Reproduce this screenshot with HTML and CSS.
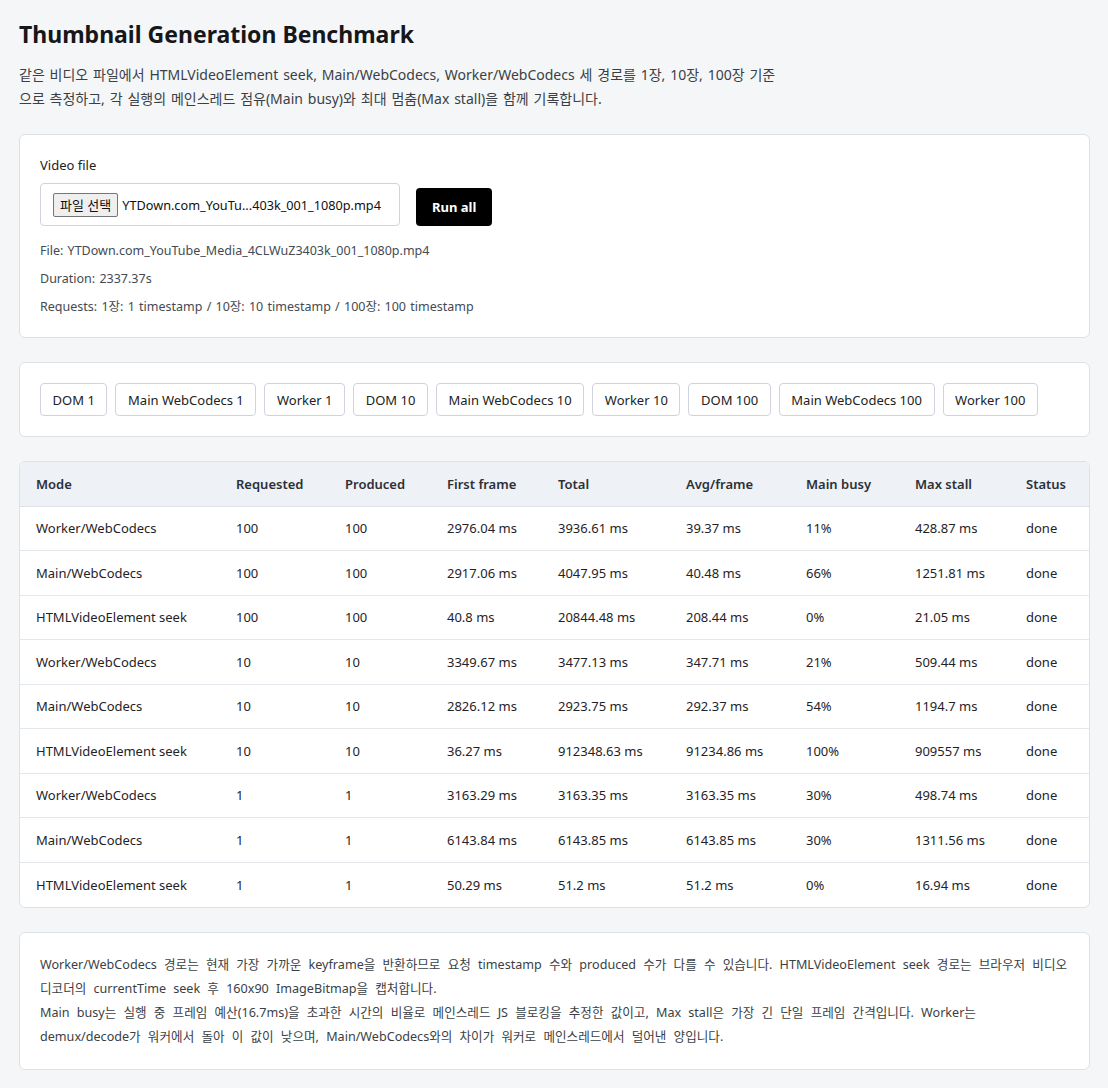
FILE: index.html
```html
<!DOCTYPE html>
<html lang="ko">
<head>
<meta charset="utf-8">
<title>Thumbnail Generation Benchmark</title>
<link rel="stylesheet" href="styles.css">
</head>
<body>
<main class="page">
  <h1 class="title">Thumbnail Generation Benchmark</h1>
  <p class="lead">같은 비디오 파일에서 HTMLVideoElement seek, Main/WebCodecs, Worker/WebCodecs 세 경로를 1장, 10장, 100장 기준으로 측정하고, 각 실행의 메인스레드 점유(Main busy)와 최대 멈춤(Max stall)을 함께 기록합니다.</p>

  <section class="card">
    <div class="field-label">Video file</div>
    <div class="file-row">
      <div class="file-input">
        <span class="file-btn">파일 선택</span>
        <span class="file-name">YTDown.com_YouTu...403k_001_1080p.mp4</span>
      </div>
      <button class="run-btn">Run all</button>
    </div>
    <p class="meta first">File: YTDown.com_YouTube_Media_4CLWuZ3403k_001_1080p.mp4</p>
    <p class="meta">Duration: 2337.37s</p>
    <p class="meta">Requests: 1장: 1 timestamp / 10장: 10 timestamp / 100장: 100 timestamp</p>
  </section>

  <section class="card buttons">
    <button class="mode-btn">DOM 1</button>
    <button class="mode-btn">Main WebCodecs 1</button>
    <button class="mode-btn">Worker 1</button>
    <button class="mode-btn">DOM 10</button>
    <button class="mode-btn">Main WebCodecs 10</button>
    <button class="mode-btn">Worker 10</button>
    <button class="mode-btn">DOM 100</button>
    <button class="mode-btn">Main WebCodecs 100</button>
    <button class="mode-btn">Worker 100</button>
  </section>

  <section class="card table-card">
    <table class="results">
      <colgroup>
        <col class="c-mode"><col class="c-req"><col class="c-prod"><col class="c-first"><col class="c-total"><col class="c-avg"><col class="c-busy"><col class="c-stall"><col class="c-status">
      </colgroup>
      <thead>
        <tr><th>Mode</th><th>Requested</th><th>Produced</th><th>First frame</th><th>Total</th><th>Avg/frame</th><th>Main busy</th><th>Max stall</th><th>Status</th></tr>
      </thead>
      <tbody>
        <tr><td>Worker/WebCodecs</td><td>100</td><td>100</td><td>2976.04 ms</td><td>3936.61 ms</td><td>39.37 ms</td><td>11%</td><td>428.87 ms</td><td>done</td></tr>
        <tr><td>Main/WebCodecs</td><td>100</td><td>100</td><td>2917.06 ms</td><td>4047.95 ms</td><td>40.48 ms</td><td>66%</td><td>1251.81 ms</td><td>done</td></tr>
        <tr><td>HTMLVideoElement seek</td><td>100</td><td>100</td><td>40.8 ms</td><td>20844.48 ms</td><td>208.44 ms</td><td>0%</td><td>21.05 ms</td><td>done</td></tr>
        <tr><td>Worker/WebCodecs</td><td>10</td><td>10</td><td>3349.67 ms</td><td>3477.13 ms</td><td>347.71 ms</td><td>21%</td><td>509.44 ms</td><td>done</td></tr>
        <tr><td>Main/WebCodecs</td><td>10</td><td>10</td><td>2826.12 ms</td><td>2923.75 ms</td><td>292.37 ms</td><td>54%</td><td>1194.7 ms</td><td>done</td></tr>
        <tr><td>HTMLVideoElement seek</td><td>10</td><td>10</td><td>36.27 ms</td><td>912348.63 ms</td><td>91234.86 ms</td><td>100%</td><td>909557 ms</td><td>done</td></tr>
        <tr><td>Worker/WebCodecs</td><td>1</td><td>1</td><td>3163.29 ms</td><td>3163.35 ms</td><td>3163.35 ms</td><td>30%</td><td>498.74 ms</td><td>done</td></tr>
        <tr><td>Main/WebCodecs</td><td>1</td><td>1</td><td>6143.84 ms</td><td>6143.85 ms</td><td>6143.85 ms</td><td>30%</td><td>1311.56 ms</td><td>done</td></tr>
        <tr><td>HTMLVideoElement seek</td><td>1</td><td>1</td><td>50.29 ms</td><td>51.2 ms</td><td>51.2 ms</td><td>0%</td><td>16.94 ms</td><td>done</td></tr>
      </tbody>
    </table>
  </section>

  <section class="card note">
    <p>Worker/WebCodecs 경로는 현재 가장 가까운 keyframe을 반환하므로 요청 timestamp 수와 produced 수가 다를 수 있습니다. HTMLVideoElement seek 경로는 브라우저 비디오 디코더의 currentTime seek 후 160x90 ImageBitmap을 캡처합니다.</p>
    <p>Main busy는 실행 중 프레임 예산(16.7ms)을 초과한 시간의 비율로 메인스레드 JS 블로킹을 추정한 값이고, Max stall은 가장 긴 단일 프레임 간격입니다. Worker는 demux/decode가 워커에서 돌아 이 값이 낮으며, Main/WebCodecs와의 차이가 워커로 메인스레드에서 덜어낸 양입니다.</p>
  </section>
</main>
</body>
</html>
```

FILE: styles.css
```css
* { box-sizing: border-box; }

html, body {
  margin: 0;
  padding: 0;
  background: #f5f6f8;
}

body {
  font-family: "Noto Sans", "Noto Sans CJK KR", sans-serif;
  color: #1f2328;
}

.page {
  padding: 16px 18px 18px 19px;
}

.title {
  margin: 0;
  font-size: 23px;
  line-height: 36px;
  font-weight: 700;
  color: #15171a;
}

.lead {
  margin: 11px 0 23px;
  max-width: 762px;
  font-size: 14px;
  line-height: 24px;
  word-spacing: 1.2px;
  color: #3a3f45;
}

.card {
  background: #fff;
  border: 1px solid #dde1e6;
  border-radius: 6px;
  padding: 20px;
  margin-bottom: 24px;
}

.field-label {
  font-size: 13px;
  line-height: 20px;
  color: #222;
  margin-bottom: 8px;
}

.file-row {
  display: flex;
  align-items: flex-end;
  gap: 16px;
}

.file-input {
  display: flex;
  align-items: center;
  width: 360px;
  height: 43px;
  border: 1px solid #cfd4dc;
  border-radius: 4px;
  padding: 0 12px;
  font-size: 13px;
  color: #111;
  white-space: nowrap;
}

.file-btn {
  display: inline-flex;
  align-items: center;
  flex: none;
  padding: 0 6px;
  height: 24px;
  background: #efefef;
  border: 1px solid #767676;
  border-radius: 2px;
  font-size: 13px;
  margin-right: 4px;
  white-space: nowrap;
}

.file-name {
  white-space: nowrap;
  font-size: 12.7px;
}

.run-btn {
  height: 38px;
  padding: 0 16px;
  background: #000;
  color: #fff;
  border: none;
  border-radius: 4px;
  font-family: inherit;
  font-size: 13px;
  font-weight: 700;
}

.meta {
  margin: 8px 0 0;
  font-size: 12.5px;
  line-height: 20px;
  word-spacing: 1px;
  color: #444a52;
}

.meta.first {
  margin-top: 15px;
}

.buttons {
  display: flex;
  flex-wrap: wrap;
  gap: 8px;
}

.mode-btn {
  height: 33px;
  padding: 0 11.6px;
  background: #fff;
  border: 1px solid #cfd4dc;
  border-radius: 4px;
  font-family: inherit;
  font-size: 13px;
  color: #222;
}

.table-card {
  padding: 0;
  overflow: hidden;
}

.results {
  width: 100%;
  border-collapse: collapse;
  table-layout: fixed;
  font-size: 13px;
}

.c-mode { width: 200px; }
.c-req { width: 109px; }
.c-prod { width: 102px; }
.c-first { width: 111px; }
.c-total { width: 128px; }
.c-avg { width: 120px; }
.c-busy { width: 109px; }
.c-stall { width: 111px; }

.results th,
.results td {
  text-align: left;
  padding: 0 0 0 16px;
  white-space: nowrap;
  color: #1f2328;
}

.results th {
  height: 44px;
  background: #eef1f5;
  font-weight: 600;
  color: #2b3038;
  border-bottom: 1px solid #dde1e6;
}

.results td {
  height: 44.5px;
  border-bottom: 1px solid #e4e7eb;
}

.results tbody tr:last-child td {
  border-bottom: none;
}

.note p {
  margin: 0;
  font-size: 12.6px;
  line-height: 24px;
  word-spacing: 3.9px;
  color: #3a3f45;
}
```
